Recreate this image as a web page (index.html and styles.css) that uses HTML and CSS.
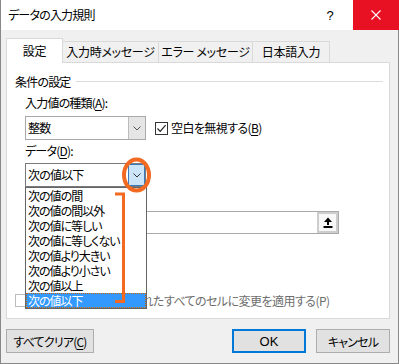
FILE: index.html
```html
<!DOCTYPE html>
<html lang="ja">
<head>
<meta charset="utf-8">
<title>データの入力規則</title>
<link rel="stylesheet" href="styles.css">
</head>
<body>
<div class="dialog">
  <div class="titlebar">
    <span class="title">データの入力規則</span>
    <span class="help">?</span>
    <span class="close">
      <svg width="10" height="10" viewBox="0 0 10 10"><path d="M0.5 0.5 L9.5 9.5 M9.5 0.5 L0.5 9.5" stroke="#fff" stroke-width="1.1" fill="none"/></svg>
    </span>
  </div>
  <div class="content">
    <div class="tabs">
      <div class="tab sel">設定</div>
      <div class="tab t2">入力時メッセージ</div>
      <div class="tab t3">エラー メッセージ</div>
      <div class="tab t4">日本語入力</div>
    </div>
    <div class="panel">
      <div class="group"><span>条件の設定</span><span class="rule"></span></div>
      <div class="label">入力値の種類(<u>A</u>):</div>
      <div class="row">
        <div class="combo">
          <span class="combo-text">整数</span>
          <span class="drop"><svg width="8" height="5" viewBox="0 0 8 5"><path d="M0.5 0.5 L4 4 L7.5 0.5" stroke="#555" stroke-width="1" fill="none"/></svg></span>
        </div>
        <div class="check">
          <span class="box"><svg width="11" height="11" viewBox="0 0 11 11"><path d="M1.5 5.5 L4.2 8.3 L9.6 2.2" stroke="#222" stroke-width="1.2" fill="none"/></svg></span>
          <span class="check-text">空白を無視する(<u>B</u>)</span>
        </div>
      </div>
      <div class="label l2">データ(<u>D</u>):</div>
      <div class="combo c2">
        <span class="combo-text">次の値以下</span>
        <span class="drop hot"><svg width="8" height="5" viewBox="0 0 8 5"><path d="M0.5 0.5 L4 4 L7.5 0.5" stroke="#333" stroke-width="1" fill="none"/></svg></span>
      </div>
      <div class="label-gap"></div>
      <div class="refbox">
        <span class="refbtn"><svg width="10" height="11" viewBox="0 0 10 11"><path d="M5 0.5 L9 5 L6 5 L6 8 L4 8 L4 5 L1 5 Z" fill="#000"/><rect x="0.5" y="9" width="9" height="2" fill="#000"/></svg></span>
      </div>
      <div class="check disabled">
        <span class="box"></span>
        <span class="check-text">同じ入力規則が設定されたすべてのセルに変更を適用する(P)</span>
      </div>
      <ul class="listbox">
        <li>次の値の間</li>
        <li>次の値の間以外</li>
        <li>次の値に等しい</li>
        <li>次の値に等しくない</li>
        <li>次の値より大きい</li>
        <li>次の値より小さい</li>
        <li>次の値以上</li>
        <li class="selected">次の値以下</li>
      </ul>
    </div>
    <div class="buttons">
      <div class="btn clear">すべてクリア(<u>C</u>)</div>
      <div class="btn ok">OK</div>
      <div class="btn cancel">キャンセル</div>
    </div>
  </div>
  <svg class="annot" width="399" height="364" viewBox="0 0 399 364">
    <ellipse cx="136.5" cy="175" rx="12.5" ry="15.5" fill="none" stroke="#f26a21" stroke-width="4"/>
    <polyline points="115,194 123.5,194 123.5,301.5 115,301.5" fill="none" stroke="#f26a21" stroke-width="3"/>
  </svg>
</div>
</body>
</html>
```

FILE: styles.css
```css
* { box-sizing: border-box; }
html, body { margin: 0; padding: 0; }
body {
  font-family: "Noto Sans CJK JP", "Noto Sans", sans-serif;
  font-size: 12px;
  font-feature-settings: "palt";
  letter-spacing: -0.8px;
  color: #000;
  background: #f0f0f0;
}
u { text-decoration: underline; text-underline-offset: 2px; }

.dialog {
  position: relative;
  width: 399px;
  height: 364px;
  background: #f0f0f0;
  display: flex;
  flex-direction: column;
  overflow: hidden;
}

.titlebar {
  height: 30px;
  flex: none;
  background: #fff;
  border-left: 1px solid #888;
  display: flex;
  align-items: center;
}
.title { flex: 1; padding-left: 7px; line-height: 16px; }
.help {
  width: 20px;
  margin-right: 13px;
  text-align: center;
  font-family: "Liberation Sans", sans-serif;
  font-size: 13px;
  letter-spacing: 0;
}
.close {
  width: 46px;
  height: 30px;
  background: #e81123;
  display: flex;
  align-items: center;
  justify-content: center;
}

.content {
  flex: 1;
  display: flex;
  flex-direction: column;
  padding: 8px 8px 10px 5px;
  border-left: 1px solid #888;
  border-right: 1px solid #888;
  border-bottom: 1px solid #888;
}

.tabs {
  position: relative;
  z-index: 1;
  height: 24px;
  display: flex;
  align-items: flex-end;
  flex: none;
}
.tab {
  height: 21px;
  border: 1px solid #d9d9d9;
  border-bottom: none;
  margin-left: -1px;
  background: #f0f0f0;
  display: flex;
  align-items: center;
  justify-content: center;
  line-height: 14px;
  letter-spacing: -0.3px;
  white-space: nowrap;
}
.tab.sel {
  width: 57px;
  height: 25px;
  margin-left: 0;
  margin-bottom: -1px;
  background: #fff;
}
.tab.t2 { width: 97px; }
.tab.t3 { width: 95px; }
.tab.t4 { width: 78px; }

.panel {
  position: relative;
  height: 257px;
  flex: none;
  background: #fff;
  border: 1px solid #d9d9d9;
  display: flex;
  flex-direction: column;
  align-items: flex-start;
}

.group {
  margin-top: 11px;
  height: 16px;
  width: 100%;
  padding-left: 8px;
  padding-right: 6px;
  display: flex;
  align-items: center;
  line-height: 16px;
}
.rule {
  flex: 1;
  height: 1px;
  margin-left: 5px;
  margin-top: -2px;
  background: #dcdcdc;
}

.label {
  margin-top: 5px;
  margin-left: 18px;
  height: 16px;
  line-height: 16px;
  white-space: nowrap;
}
.label.l2 { margin-top: 3px; }
.label-gap { height: 19px; flex: none; }

.row {
  margin-top: 5px;
  margin-left: 18px;
  height: 24px;
  display: flex;
  align-items: center;
}

.combo {
  width: 121px;
  height: 24px;
  border: 1px solid #a9a9a9;
  background: #fff;
  display: flex;
  flex: none;
}
.combo.c2 {
  margin-top: 4px;
  margin-left: 18px;
  border-color: #7a7a7a;
}
.combo-text {
  flex: 1;
  padding-left: 2px;
  line-height: 22px;
  white-space: nowrap;
}
.drop {
  width: 17px;
  height: 22px;
  background: #e5e5e5;
  border-left: 1px solid #bcbcbc;
  display: flex;
  align-items: center;
  justify-content: center;
}
.drop.hot {
  background: #cce4f7;
  border: 1px solid #3a78b8;
}

.check {
  display: flex;
  align-items: center;
  margin-left: 9px;
  white-space: nowrap;
}
.box {
  width: 13px;
  height: 13px;
  border: 1px solid #333;
  background: #fff;
  display: flex;
  align-items: center;
  justify-content: center;
  flex: none;
}
.check-text { margin-left: 3px; line-height: 16px; letter-spacing: -0.6px; }

.refbox {
  margin-top: 5px;
  margin-left: 18px;
  width: 314px;
  height: 23px;
  border: 1px solid #a9a9a9;
  background: #fff;
  display: flex;
  justify-content: flex-end;
}
.refbtn {
  width: 21px;
  height: 21px;
  border: 2px solid #cdcdcd;
  background: #f7f7f7;
  display: flex;
  align-items: center;
  justify-content: center;
}

.check.disabled {
  margin-top: 60px;
  margin-left: 8px;
  height: 13px;
  color: #6d6d6d;
}
.check.disabled .box { border-color: #bcbcbc; }
.check.disabled .check-text { margin-left: 2px; letter-spacing: -0.55px; }

.listbox {
  position: absolute;
  left: 18px;
  top: 124px;
  width: 122px;
  margin: 0;
  padding: 0;
  list-style: none;
  background: #fff;
  border: 1px solid #646464;
  z-index: 2;
}
.listbox li {
  height: 15px;
  line-height: 15px;
  padding-left: 2px;
  letter-spacing: -1px;
  white-space: nowrap;
}
.listbox li.selected {
  background: #3399ff;
  color: #fff;
  outline: 1px dotted #cc6600;
  outline-offset: -1px;
}

.buttons {
  margin-top: 10px;
  height: 24px;
  display: flex;
  flex: none;
}
.btn {
  height: 24px;
  border: 1px solid #adadad;
  background: #e1e1e1;
  display: flex;
  align-items: center;
  justify-content: center;
  white-space: nowrap;
}
.btn.clear { width: 88px; }
.btn.ok {
  width: 74px;
  margin-left: auto;
  border: 2px solid #0078d7;
  font-family: "Liberation Sans", "Noto Sans CJK JP", sans-serif;
  font-size: 13px;
  letter-spacing: 0;
}
.btn.cancel { width: 74px; margin-left: 10px; }

.annot {
  position: absolute;
  left: 0;
  top: 0;
  pointer-events: none;
  z-index: 5;
}
```
